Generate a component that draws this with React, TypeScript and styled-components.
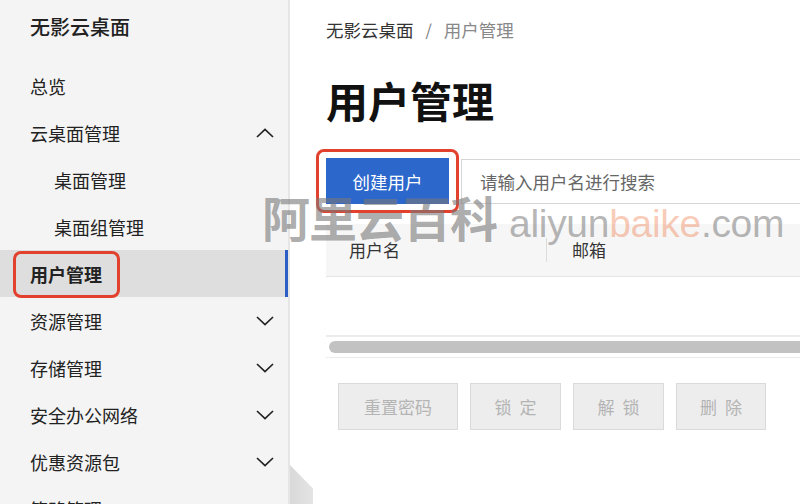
import styled, { createGlobalStyle } from "styled-components";

const GlobalStyle = createGlobalStyle`
  html, body {
    margin: 0;
    padding: 0;
    background: #fff;
  }
  body {
    font-family: "Noto Sans CJK SC", "Noto Sans", sans-serif;
    color: #222;
  }
`;

type NavItem = {
  label: string;
  sub?: boolean;
  active?: boolean;
  arrow?: "up" | "down";
};

const navItems: NavItem[] = [
  { label: "总览" },
  { label: "云桌面管理", arrow: "up" },
  { label: "桌面管理", sub: true },
  { label: "桌面组管理", sub: true },
  { label: "用户管理", active: true },
  { label: "资源管理", arrow: "down" },
  { label: "存储管理", arrow: "down" },
  { label: "安全办公网络", arrow: "down" },
  { label: "优惠资源包", arrow: "down" },
  { label: "策略管理" },
];

const actions = [
  { label: "重置密码", width: 120, spacing: 0 },
  { label: "锁定", width: 91, spacing: 8 },
  { label: "解锁", width: 91, spacing: 8 },
  { label: "删除", width: 90, spacing: 8 },
];

function Chevron({ dir }: { dir: "up" | "down" }) {
  return (
    <svg width="18" height="10" viewBox="0 0 18 10">
      <polyline
        points={dir === "up" ? "1,9 9,1.5 17,9" : "1,1 9,8.5 17,1"}
        fill="none"
        stroke="#222"
        strokeWidth="1.7"
      />
    </svg>
  );
}

export default function App() {
  return (
    <Page>
      <GlobalStyle />
      <Sidebar>
        <Brand>无影云桌面</Brand>
        <Nav>
          {navItems.map((item) => (
            <NavRow key={item.label} $sub={item.sub} $active={item.active}>
              <NavLabel $active={item.active}>
                {item.label}
                {item.active && <Annotation />}
              </NavLabel>
              {item.arrow && <Chevron dir={item.arrow} />}
            </NavRow>
          ))}
        </Nav>
      </Sidebar>

      <Main>
        <Breadcrumb>
          <span>无影云桌面</span>
          <Sep>/</Sep>
          <Current>用户管理</Current>
        </Breadcrumb>
        <Title>用户管理</Title>

        <Toolbar>
          <CreateWrap>
            <CreateButton>创建用户</CreateButton>
            <ButtonAnnotation />
          </CreateWrap>
          <Search placeholder="请输入用户名进行搜索" />
        </Toolbar>

        <Table>
          <HeadRow>
            <HeadCell $width={220}>用户名</HeadCell>
            <HeadCell $divider>邮箱</HeadCell>
          </HeadRow>
          <EmptyBody />
          <ScrollTrack>
            <ScrollThumb />
          </ScrollTrack>
        </Table>

        <Actions>
          {actions.map((a) => (
            <ActionButton key={a.label} $width={a.width} $spacing={a.spacing}>
              {a.label}
            </ActionButton>
          ))}
        </Actions>

        <CollapseHandle />
      </Main>

      <Watermark>
        <WatermarkCn>阿里云百科</WatermarkCn>
        <WatermarkEn>
          aliyun<Orange>baike</Orange>.com
        </WatermarkEn>
      </Watermark>
    </Page>
  );
}

const Page = styled.div`
  position: relative;
  display: flex;
  width: 800px;
  height: 504px;
  overflow: hidden;
  box-shadow: inset 0 3px 3px -2px rgba(0, 0, 0, 0.08);
`;

const Sidebar = styled.aside`
  flex: 0 0 288px;
  background: #f4f4f4;
  border-right: 2px solid #e6e6e6;
  overflow: hidden;
`;

const Brand = styled.div`
  height: 53px;
  line-height: 53px;
  padding-left: 30px;
  font-size: 20px;
  font-weight: 500;
  color: #222;
`;

const Nav = styled.nav`
  margin-top: 9px;
  display: flex;
  flex-direction: column;
`;

const NavRow = styled.div<{ $sub?: boolean; $active?: boolean }>`
  height: 47px;
  display: flex;
  align-items: center;
  justify-content: space-between;
  padding-left: ${(p) => (p.$sub ? 54 : 30)}px;
  padding-right: 14px;
  font-size: 18px;
  color: #222;
  background: ${(p) => (p.$active ? "#dedede" : "transparent")};
  box-shadow: ${(p) => (p.$active ? "inset -3px 0 0 #2c5fc6" : "none")};
`;

const NavLabel = styled.span<{ $active?: boolean }>`
  position: relative;
  font-weight: ${(p) => (p.$active ? 700 : 400)};
  line-height: 24px;
`;

const Annotation = styled.span`
  position: absolute;
  left: -17px;
  top: -11px;
  width: 101px;
  height: 41px;
  border: 3px solid #e2412d;
  border-radius: 8px;
`;

const Main = styled.main`
  position: relative;
  flex: 1;
  min-width: 0;
  padding: 17px 0 0 36px;
  background: #fff;
  overflow: hidden;
`;

const Breadcrumb = styled.div`
  display: flex;
  align-items: center;
  height: 24px;
  font-size: 17.5px;
  color: #333;
  white-space: nowrap;
`;

const Sep = styled.span`
  margin: 0 12px;
  color: #777;
  font-size: 16px;
`;

const Current = styled.span`
  color: #888;
`;

const Title = styled.h1`
  margin: 34px 0 0;
  font-size: 42px;
  line-height: 50px;
  font-weight: 700;
  color: #111;
  white-space: nowrap;
`;

const Toolbar = styled.div`
  margin-top: 33px;
  display: flex;
  align-items: center;
  gap: 12px;
`;

const CreateWrap = styled.div`
  position: relative;
  flex: 0 0 auto;
`;

const CreateButton = styled.button`
  display: block;
  width: 123px;
  height: 46px;
  border: none;
  background: #2c67cc;
  color: #fff;
  font-family: inherit;
  font-size: 17.5px;
  padding: 0;
`;

const ButtonAnnotation = styled.span`
  position: absolute;
  left: -10px;
  top: -9px;
  width: 137px;
  height: 58px;
  border: 3px solid #e2412d;
  border-radius: 8px;
`;

const Search = styled.input`
  flex: 0 0 420px;
  height: 45px;
  box-sizing: border-box;
  border: 1px solid #d6d6d6;
  border-right: none;
  padding: 0 0 0 18px;
  font-family: inherit;
  font-size: 17.5px;
  color: #333;
  outline: none;
  &::placeholder {
    color: #666;
  }
`;

const Table = styled.div`
  margin-top: 20px;
  width: 600px;
`;

const HeadRow = styled.div`
  display: flex;
  align-items: center;
  height: 52px;
  background: #f6f6f6;
  border-bottom: 1px solid #e4e4e4;
`;

const HeadCell = styled.div<{ $width?: number; $divider?: boolean }>`
  flex: ${(p) => (p.$width ? `0 0 ${p.$width}px` : "1")};
  height: 24px;
  line-height: 24px;
  padding-left: ${(p) => (p.$divider ? 25 : 23)}px;
  box-sizing: border-box;
  font-size: 17px;
  color: #333;
  border-left: ${(p) => (p.$divider ? "1px solid #dcdcdc" : "none")};
`;

const EmptyBody = styled.div`
  height: 58px;
`;

const ScrollTrack = styled.div`
  height: 20px;
  border-top: 2px solid #ececec;
  border-bottom: 1px solid #ececec;
  display: flex;
  align-items: center;
  padding-left: 3px;
`;

const ScrollThumb = styled.div`
  flex: 1;
  height: 12px;
  border-radius: 6px 0 0 6px;
  background: #c2c2c2;
`;

const Actions = styled.div`
  margin: 25px 0 0 12px;
  display: flex;
  gap: 12px;
`;

const ActionButton = styled.button<{ $width: number; $spacing: number }>`
  width: ${(p) => p.$width}px;
  height: 47px;
  box-sizing: border-box;
  border: 1px solid #dadada;
  background: #ededed;
  color: #b4b4b4;
  font-family: inherit;
  font-size: 17px;
  letter-spacing: ${(p) => p.$spacing}px;
  text-indent: ${(p) => p.$spacing}px;
  padding: 0;
`;

const CollapseHandle = styled.div`
  position: absolute;
  left: 0;
  bottom: 0;
  width: 23px;
  height: 39px;
  background: linear-gradient(90deg, #d9d9d9, #e4e4e4);
  clip-path: polygon(0 0, 100% 60%, 100% 100%, 0 100%);
`;

const Watermark = styled.div`
  position: absolute;
  left: 262px;
  top: 181px;
  display: flex;
  align-items: baseline;
  gap: 12px;
  pointer-events: none;
  white-space: nowrap;
`;

const WatermarkCn = styled.span`
  font-size: 48px;
  font-weight: 700;
  letter-spacing: -1px;
  color: rgba(120, 120, 120, 0.62);
`;

const WatermarkEn = styled.span`
  font-family: "Liberation Sans", Arial, sans-serif;
  font-size: 39px;
  letter-spacing: -0.3px;
  color: rgba(120, 120, 120, 0.55);
`;

const Orange = styled.span`
  color: rgba(238, 120, 70, 0.4);
`;
